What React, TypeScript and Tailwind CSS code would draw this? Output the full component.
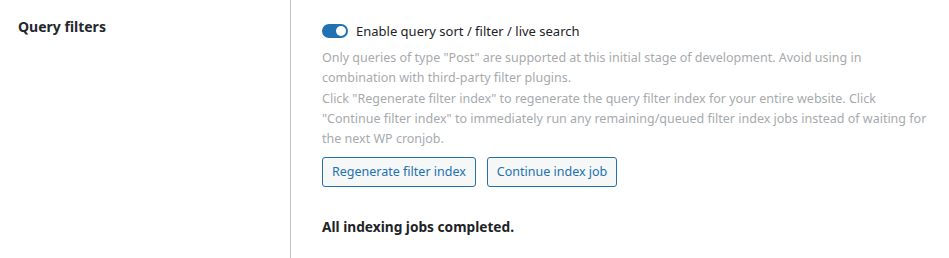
export default function App() {
  const font = { fontFamily: '"Noto Sans", "Open Sans", Arial, sans-serif' };
  return (
    <div className="flex w-[949px] h-[258px] bg-white text-[#1d2327]" style={font}>
      <div className="w-[290px] shrink-0 pl-[18px] pt-[16px]">
        <div className="text-[14px] font-bold leading-[22px] text-[#23282d]">Query filters</div>
      </div>
      <div className="w-px bg-[#c3c4c7] shrink-0" />
      <div className="pl-[31px] pt-[21px] w-[640px]">
        <div className="flex items-center gap-[8px] h-[20px]">
          <div className="w-[26px] h-[14px] rounded-full bg-[#2271b1] flex items-center justify-end pr-[2px]">
            <div className="w-[10px] h-[10px] rounded-full bg-white" />
          </div>
          <span className="text-[13px] leading-[20px] text-[#1d2327]">Enable query sort / filter / live search</span>
        </div>
        <div className="w-[610px]">
          <p className="mt-[7px] text-[12.5px] leading-[20px] text-[#a7aaad]">
            Only queries of type "Post" are supported at this initial stage of development. Avoid using in combination with third-party filter plugins.
          </p>
          <p className="mt-[1px] text-[12.5px] leading-[20px] text-[#a7aaad]">
            Click "Regenerate filter index" to regenerate the query filter index for your entire website. Click "Continue filter index" to immediately run any remaining/queued filter index jobs instead of waiting for the next WP cronjob.
          </p>
        </div>
        <div className="flex gap-[11px] mt-[8px]">
          <button className="h-[30px] px-[9px] border border-[#2271b1] rounded-[3px] bg-[#f6f7f7] text-[#2271b1] text-[12.5px] leading-[28px]">Regenerate filter index</button>
          <button className="h-[30px] px-[9px] border border-[#2271b1] rounded-[3px] bg-[#f6f7f7] text-[#2271b1] text-[12.5px] leading-[28px]">Continue index job</button>
        </div>
        <div className="mt-[30px] text-[13.7px] font-bold leading-[20px]">All indexing jobs completed.</div>
      </div>
    </div>
  );
}
